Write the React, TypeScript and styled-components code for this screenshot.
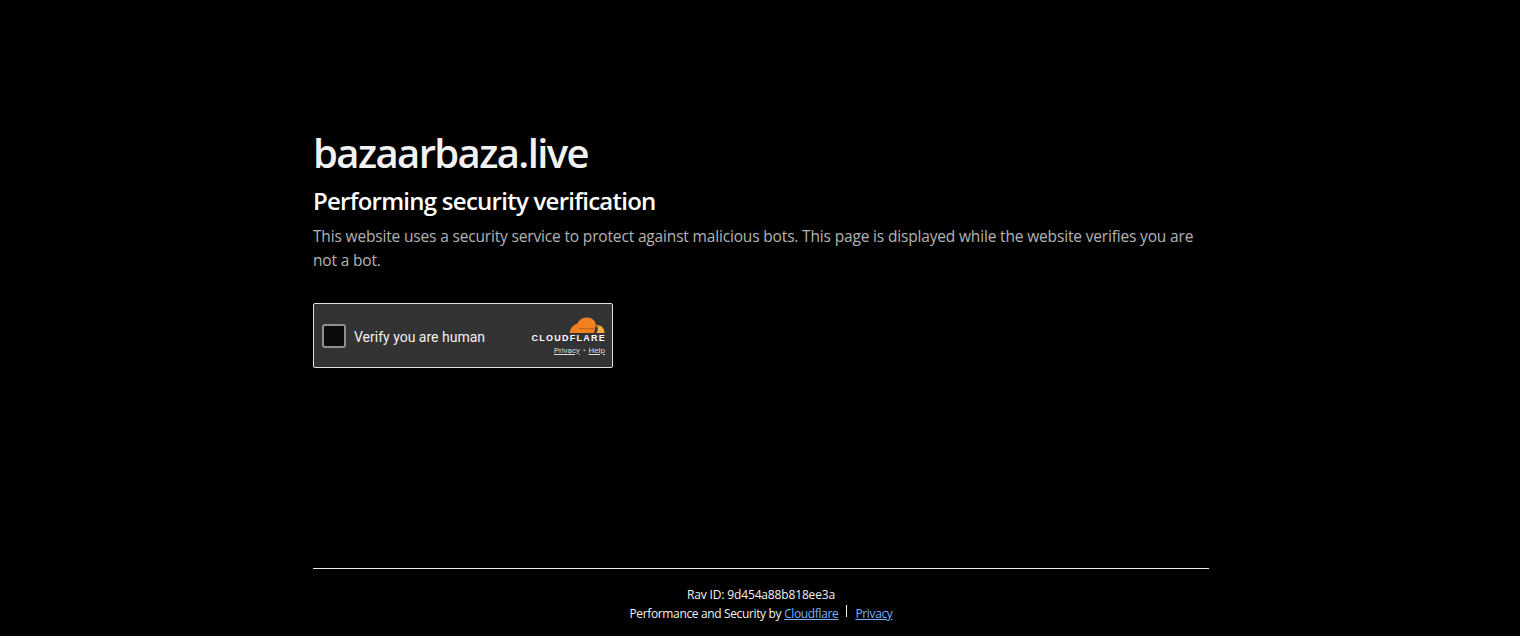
import React from "react";
import styled, { createGlobalStyle } from "styled-components";

const Global = createGlobalStyle`
  html, body { margin: 0; padding: 0; background: #000; height: 100%; overflow: hidden; }
  #root { height: 100%; }
`;

const Page = styled.div`
  box-sizing: border-box;
  height: 636px;
  display: flex;
  flex-direction: column;
  font-family: "Open Sans", "Noto Sans", sans-serif;
  color: #fff;
`;

const Main = styled.main`
  width: 896px;
  margin: 0 0 0 313px;
  padding-top: 125px;
  flex: 1;
`;

const Title = styled.h1`
  margin: 0;
  font-size: 40px;
  line-height: 56px;
  font-weight: 600;
  letter-spacing: -1.6px;
  color: #f2f2f2;
`;

const Subtitle = styled.h2`
  margin: 5px 0 0;
  font-size: 24px;
  line-height: 30px;
  font-weight: 600;
  letter-spacing: -0.74px;
  color: #fff;
`;

const Body = styled.p`
  margin: 8px 0 0;
  font-size: 15.5px;
  line-height: 24px;
  letter-spacing: -0.165px;
  color: #b4b4b4;
`;

const Widget = styled.div`
  box-sizing: border-box;
  margin-top: 31px;
  width: 300px;
  height: 65px;
  background: #333;
  border: 1px solid #e0e0e0;
  border-radius: 2px;
  display: flex;
  align-items: center;
  padding: 0 7px 0 8px;
  font-family: Roboto, "Liberation Sans", sans-serif;
`;

const Check = styled.span`
  box-sizing: border-box;
  width: 24px;
  height: 24px;
  background: #0a0a0a;
  border: 2px solid #8f8f8f;
  border-radius: 3px;
  flex: none;
`;

const Label = styled.span`
  margin: 2px 0 0 8px;
  font-size: 14px;
  color: #f0f0f0;
  flex: 1;
`;

const Brand = styled.div`
  display: flex;
  flex-direction: column;
  align-items: flex-end;
  margin-top: 2px;
`;

const BrandWord = styled.span`
  font-family: "Liberation Sans", sans-serif;
  font-size: 9px;
  line-height: 9px;
  font-weight: 700;
  letter-spacing: 1.25px;
  margin-right: -1px;
  color: #fff;
`;

const BrandLinks = styled.span`
  margin-top: 3px;
  font-size: 8px;
  line-height: 10px;
  color: #ddd;
  display: flex;
  gap: 3px;
`;

const SmallLink = styled.a`
  color: #ddd;
  text-decoration: underline;
`;

const Footer = styled.footer`
  width: 896px;
  margin: 0 0 0 313px;
  border-top: 1px solid #e8e8e8;
  padding-top: 17px;
  height: 68px;
  box-sizing: border-box;
  text-align: center;
  font-size: 12px;
  color: #f2f2f2;
`;

const Ray = styled.div`
  height: 13px;
  line-height: 17px;
  letter-spacing: -0.15px;
  overflow: hidden;
`;

const Perf = styled.div`
  margin-top: 6px;
  line-height: 17px;
  letter-spacing: -0.36px;
  display: flex;
  justify-content: center;
`;

const Sep = styled.span`
  border-left: 1px solid #f2f2f2;
  height: 12px;
  margin: 0 8px;
`;

const FootLink = styled.a<{ $gap?: number }>`
  color: #7ab0fa;
  text-decoration: underline;
  margin-left: ${(p) => p.$gap ?? 0}px;
`;

const Cloud = () => (
  <svg width="36" height="17" viewBox="0 0 36 17" aria-hidden="true">
    <path
      fill="#f38020"
      d="M0.5 16 C1 12 3.5 8.5 7 7 L8.5 6.5 C10 2.5 14 0.5 18 0.5 C23 0.5 26 3.5 27 7.5 L25 16 Z"
    />
    <path
      fill="#fbad41"
      d="M27 8 C32 7.5 35.5 11 35.5 16 L27.5 16 C29 13 29.5 10.5 27.5 9.5 Z"
    />
    <path fill="none" stroke="#a85a1c" strokeWidth="0.8" d="M10 11.5 L27 11.8 M26 9 L31 9" />
  </svg>
);

export default function App() {
  return (
    <Page>
      <Global />
      <Main>
        <Title>bazaarbaza.live</Title>
        <Subtitle>Performing security verification</Subtitle>
        <Body>
          This website uses a security service to protect against malicious bots. This page is displayed while the website verifies you are not a bot.
        </Body>
        <Widget>
          <Check />
          <Label>Verify you are human</Label>
          <Brand>
            <Cloud />
            <BrandWord>CLOUDFLARE</BrandWord>
            <BrandLinks>
              <SmallLink>Privacy</SmallLink>
              <span>•</span>
              <SmallLink>Help</SmallLink>
            </BrandLinks>
          </Brand>
        </Widget>
      </Main>
      <Footer>
        <Ray>Ray ID: 9d454a88b818ee3a</Ray>
        <Perf>
          <span>Performance and Security by</span>
          <FootLink $gap={3}>Cloudflare</FootLink>
          <Sep />
          <FootLink>Privacy</FootLink>
        </Perf>
      </Footer>
    </Page>
  );
}
